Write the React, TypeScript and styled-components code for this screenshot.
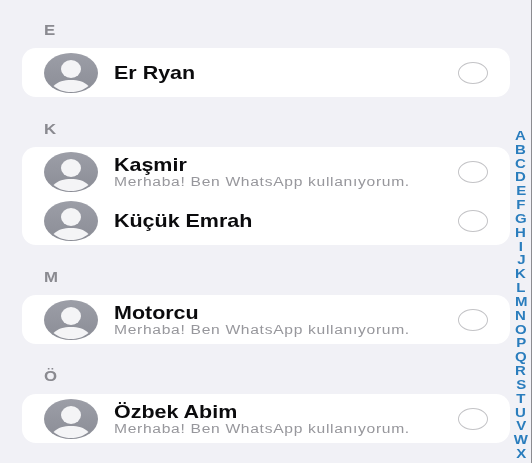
import React from "react";
import styled, { createGlobalStyle } from "styled-components";

const GlobalStyle = createGlobalStyle`
  html, body {
    margin: 0;
    padding: 0;
    background: #f1f1f6;
  }
`;

const Page = styled.div`
  position: relative;
  box-sizing: border-box;
  width: 532px;
  height: 463px;
  overflow: hidden;
  padding: 19px 22px 0;
  display: flex;
  flex-direction: column;
  gap: 21px;
  background: #f1f1f6;
  border-right: 1px solid #8c8c90;
  font-family: "Liberation Sans", sans-serif;
`;

const Section = styled.section`
  width: 488px;
`;

// the source picture is stretched sideways, so the text is widened the same way
const Letter = styled.div`
  height: 22px;
  line-height: 22px;
  margin-bottom: 7px;
  padding-left: 19.6px;
  font-size: 15px;
  font-weight: 700;
  transform: scaleX(1.12);
  transform-origin: left center;
  color: #8a8a90;
  filter: blur(0.3px);
`;

const Card = styled.div`
  background: #fff;
  border-radius: 14px;
  overflow: hidden;
`;

const Row = styled.div`
  height: 49px;
  padding: 0 22px;
  display: flex;
  align-items: center;
  gap: 16px;
`;

const Info = styled.div<{ $hasStatus: boolean }>`
  flex: 1;
  min-width: 0;
  display: flex;
  flex-direction: column;
  padding-top: ${(p) => (p.$hasStatus ? "2px" : "0")};
`;

const Name = styled.div`
  font-size: 18.5px;
  line-height: 20px;
  font-weight: 700;
  transform: scaleX(1.16);
  transform-origin: left center;
  white-space: nowrap;
  color: #0b0b0d;
  filter: blur(0.25px);
`;

const Status = styled.div`
  font-size: 12.5px;
  line-height: 15px;
  letter-spacing: 0.55px;
  transform: scaleX(1.25);
  transform-origin: left center;
  white-space: nowrap;
  color: #97979c;
  filter: blur(0.25px);
`;

const Radio = styled.div`
  box-sizing: border-box;
  width: 30px;
  height: 22px;
  border: 1px solid #c3c3c6;
  border-radius: 50%;
  background: #fff;
`;

const Index = styled.div`
  position: absolute;
  top: 129px;
  right: 0;
  width: 20px;
  display: flex;
  flex-direction: column;
  align-items: center;
`;

const IndexLetter = styled.span`
  height: 13.83px;
  line-height: 14px;
  font-size: 12.5px;
  font-weight: 700;
  transform: scaleX(1.2);
  color: #2a7dbd;
  filter: blur(0.2px);
`;

const Avatar = () => (
  <svg width="54" height="40" viewBox="0 0 54 40" preserveAspectRatio="none" style={{ flex: "none" }}>
    <defs>
      <linearGradient id="avatarFill" x1="0" y1="0" x2="0" y2="1">
        <stop offset="0" stopColor="#9c9ea7" />
        <stop offset="1" stopColor="#8b8d96" />
      </linearGradient>
    </defs>
    <ellipse cx="27" cy="20" rx="27" ry="20" fill="url(#avatarFill)" />
    <ellipse cx="27" cy="16" rx="10" ry="9" fill="#f4f4f6" />
    <path d="M9.5 33 C14 28.5 20 27 27 27 C34 27 40 28.5 44.5 33 C39 37.5 33 39 27 39 C21 39 15 37.5 9.5 33 Z" fill="#f4f4f6" />
  </svg>
);

const STATUS = "Merhaba! Ben WhatsApp kullanıyorum.";

const groups = [
  { letter: "E", people: [{ name: "Er Ryan", status: "" }] },
  {
    letter: "K",
    people: [
      { name: "Kaşmir", status: STATUS },
      { name: "Küçük Emrah", status: "" },
    ],
  },
  { letter: "M", people: [{ name: "Motorcu", status: STATUS }] },
  { letter: "Ö", people: [{ name: "Özbek Abim", status: STATUS }] },
];

const alphabet = "ABCDEFGHIJKLMNOPQRSTUVWX".split("");

export default function App() {
  return (
    <Page>
      <GlobalStyle />
      {groups.map((group) => (
        <Section key={group.letter}>
          <Letter>{group.letter}</Letter>
          <Card>
            {group.people.map((person) => (
              <Row key={person.name}>
                <Avatar />
                <Info $hasStatus={!!person.status}>
                  <Name>{person.name}</Name>
                  {person.status && <Status>{person.status}</Status>}
                </Info>
                <Radio />
              </Row>
            ))}
          </Card>
        </Section>
      ))}
      <Index>
        {alphabet.map((l) => (
          <IndexLetter key={l}>{l}</IndexLetter>
        ))}
      </Index>
    </Page>
  );
}
